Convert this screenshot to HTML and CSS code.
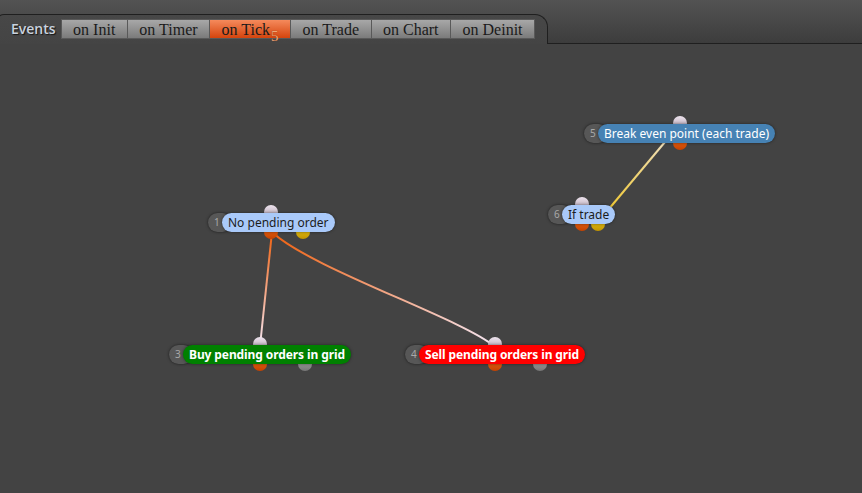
FILE: index.html
```html
<!DOCTYPE html>
<html lang="en">

<head>
  <meta charset="UTF-8">
  <title>Events</title>
  <link rel="stylesheet" href="styles.css">
</head>

<body>
  <div class="topbar">
    <div class="tabs">
      <span class="tabs-tit">Events</span>
      <span class="ev-btn">on Init</span>
      <span class="ev-btn">on Timer</span>
      <span class="ev-btn ev-on">on Tick<sub class="ev-count">5</sub></span>
      <span class="ev-btn">on Trade</span>
      <span class="ev-btn">on Chart</span>
      <span class="ev-btn">on Deinit</span>
    </div>
    <div class="filler"></div>
  </div>

  <!-- diagram: links under the nodes -->
  <div class="canvas">
    <svg class="links" width="862" height="493" viewBox="0 0 862 493">
      <defs>
        <linearGradient id="g13" gradientUnits="userSpaceOnUse" x1="272" y1="232" x2="260" y2="346">
          <stop offset="0" stop-color="#f0600e" />
          <stop offset="1" stop-color="#f4e6f2" />
        </linearGradient>
        <linearGradient id="g14" gradientUnits="userSpaceOnUse" x1="272" y1="232" x2="494" y2="346">
          <stop offset="0" stop-color="#f0600e" />
          <stop offset="1" stop-color="#f4e6f2" />
        </linearGradient>
        <linearGradient id="g65" gradientUnits="userSpaceOnUse" x1="598" y1="222" x2="680" y2="124">
          <stop offset="0" stop-color="#f0c418" />
          <stop offset="1" stop-color="#efe4dc" />
        </linearGradient>
      </defs>
      <path d="M272 232 L260 346" stroke="url(#g13)" />
      <path d="M272 232 C310 268 460 318 494 346" stroke="url(#g14)" />
      <path d="M598 222 L680 124" stroke="url(#g65)" />
    </svg>

    <div class="node" style="left:208px;top:213px;--off:32px">
      <span class="num">1</span>
      <span class="label">No pending order</span>
      <i class="dot dot-in"></i>
      <i class="dot dot-out orange"></i>
      <i class="dot dot-out2 yellow"></i>
    </div>

    <div class="node node-blue" style="left:584px;top:124px">
      <span class="num">5</span>
      <span class="label">Break even point (each trade)</span>
      <i class="dot dot-in"></i>
      <i class="dot dot-out orange"></i>
    </div>

    <div class="node" style="left:548px;top:205px;--off:16px">
      <span class="num">6</span>
      <span class="label">If trade</span>
      <i class="dot dot-in"></i>
      <i class="dot dot-out orange"></i>
      <i class="dot dot-out2 yellow"></i>
    </div>

    <div class="node node-green" style="left:169px;top:345px;--off:45px">
      <span class="num">3</span>
      <span class="label">Buy pending orders in grid</span>
      <i class="dot dot-in"></i>
      <i class="dot dot-out orange"></i>
      <i class="dot dot-out2 grey"></i>
    </div>

    <div class="node node-red" style="left:405px;top:345px;--off:45px">
      <span class="num">4</span>
      <span class="label">Sell pending orders in grid</span>
      <i class="dot dot-in"></i>
      <i class="dot dot-out orange"></i>
      <i class="dot dot-out2 grey"></i>
    </div>
  </div>
</body>

</html>
```

FILE: styles.css
```css
body {
  margin: 0;
  width: 862px;
  height: 493px;
  overflow: hidden;
  position: relative;
  background-color: #434343;
  font-family: "Noto Sans", sans-serif;
}

/* top bar with the events tab */
.topbar {
  height: 44px;
  display: flex;
  background: linear-gradient(#535353, #3c3c3c);
}

.tabs {
  width: 552px;
  margin-left: -4px;
  margin-top: 14px;
  box-sizing: border-box;
  border: 1px solid #1f1f1f;
  border-bottom: 0;
  border-radius: 8px 13px 0 0;
  background: linear-gradient(#474747, #444);
  display: flex;
  align-items: flex-start;
  padding: 4px 0 0 14px;
}

.filler {
  flex: 1;
  align-self: flex-end;
  border-bottom: 1px solid #1f1f1f;
}

.tabs-tit {
  font: 600 14px/20px "Open Sans", sans-serif;
  color: #c9d2de;
  text-shadow: 1px 1px 1px #151515;
  margin-right: 5px;
}

.ev-btn {
  height: 20px;
  box-sizing: border-box;
  border: 1px solid #595959;
  margin-right: -1px;
  padding: 0 11.5px;
  background: linear-gradient(#a8a8a8, #7b7b7b);
  font: 16px/19px "Liberation Serif", serif;
  color: #1a1a1a;
  white-space: nowrap;
}

.ev-on {
  background: linear-gradient(#f58a5c, #d4440d);
}

.ev-count {
  font-size: 15px;
  color: #eea678;
  text-shadow: 0 0 1px #7a3010;
  vertical-align: -6px;
  line-height: 0;
  margin-left: 1px;
}

/* diagram */
.canvas {
  position: absolute;
  left: 0;
  top: 0;
  width: 862px;
  height: 493px;
}

.links {
  position: absolute;
  left: 0;
  top: 0;
}

.links path {
  fill: none;
  stroke-width: 2;
}

.node {
  position: absolute;
  display: flex;
  height: 19px;
  font-size: 12px;
  line-height: 19px;
}

.num {
  width: 24px;
  margin-right: -10px;
  padding-left: 6px;
  box-sizing: border-box;
  border-radius: 10px;
  background-color: #575757;
  color: #a9a9a9;
  font-size: 10px;
  box-shadow: 0 0 3px rgba(0, 0, 0, 0.6);
}

.label {
  position: relative;
  z-index: 2;
  padding: 0 6px;
  border-radius: 10px;
  background-color: #a9c9f9;
  color: #1c1c1c;
  white-space: nowrap;
  box-shadow: 0 0 3px rgba(0, 0, 0, 0.5);
}

.node-blue .label {
  background-color: #4682b4;
  color: #fff;
}

.node-green .label {
  background-color: #008000;
  color: #fff;
  font-weight: bold;
  letter-spacing: -0.1px;
}

.node-red .label {
  background-color: #ff0000;
  color: #fff;
  font-weight: bold;
  letter-spacing: -0.1px;
}

.dot {
  position: absolute;
  width: 14px;
  height: 14px;
  border-radius: 50%;
  margin-left: -7px;
  left: 50%;
  z-index: 1;
}

.dot-in {
  top: -8px;
  background: linear-gradient(#eee4ee, #a998aa);
}

.dot-out {
  bottom: -7px;
}

.dot-out2 {
  bottom: -7px;
  left: calc(50% + var(--off));
}

.orange {
  background: linear-gradient(#f46e1c, #c44200);
}

.yellow {
  background: linear-gradient(#f2d21e, #c29400);
}

.grey {
  background: linear-gradient(#b0b0b0, #767676);
}
```
